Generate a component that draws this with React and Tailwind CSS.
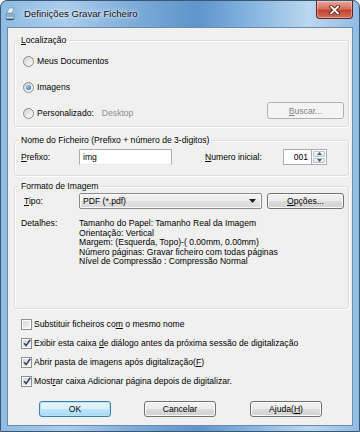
import React from 'react';

const Radio = ({ checked }) => (
  <span className="w-[11px] h-[11px] rounded-full border border-[#8b8b8b] bg-linear-to-br from-[#d4d4d4] to-[#fbfbfb] flex items-center justify-center shrink-0">
    {checked && (
      <span className="w-[5px] h-[5px] rounded-full bg-[radial-gradient(circle_at_35%_35%,#8fd0ff,#1b5fae)]" />
    )}
  </span>
);

const Check = ({ checked }) => (
  <span className="w-[11px] h-[11px] border border-[#8e8f8f] bg-white p-[1px] shrink-0 flex">
    <span className="flex-1 bg-linear-to-br from-[#d6d6d6] to-[#f6f6f6] flex items-center justify-center">
      {checked && (
        <svg width="8" height="8" viewBox="0 0 8 8">
          <path d="M1 4.2 L3.1 6.6 L7.2 0.8" stroke="#2b3f6b" strokeWidth="1.5" fill="none" />
        </svg>
      )}
    </span>
  </span>
);

const Btn = ({ children, kind = 'normal', className = '' }) => {
  const styles = {
    normal: 'border-[#707070] text-black shadow-[inset_0_0_0_1px_#fcfcfc] bg-[linear-gradient(#f2f2f2_0%,#ebebeb_50%,#dddddd_51%,#cfcfcf_100%)]',
    def: 'border-[#3c7fb1] text-black shadow-[inset_0_0_0_1px_#b9e2f7] bg-[linear-gradient(#eaf6fd_0%,#d9f0fc_50%,#bee6fd_51%,#a7d9f5_100%)]',
    disabled: 'border-[#adb2b5] text-[#838383] bg-[#f4f4f4]',
  };
  return (
    <div className={`h-[17px] border rounded-[3px] flex items-center justify-center ${styles[kind]} ${className}`}>
      {children}
    </div>
  );
};

const Group = ({ legend, className = '', children }) => (
  <fieldset className={`m-0 p-0 border border-[#d5dfe5] rounded-[3px] shadow-[inset_1px_1px_0_#fff,1px_1px_0_#fff] ${className}`}>
    <legend className="ml-[4px] px-[2px] leading-[10px]">{legend}</legend>
    {children}
  </fieldset>
);

const U = ({ children }) => <span className="underline underline-offset-[1px]">{children}</span>;

export default function App() {
  const details = [
    'Tamanho do Papel: Tamanho Real da Imagem',
    'Orientação: Vertical',
    'Margem: (Esquerda, Topo)-( 0.00mm, 0.00mm)',
    'Número páginas: Gravar ficheiro com todas páginas',
    'Nível de Compressão : Compressão Normal',
  ];

  return (
    <div className="w-[360px] h-[432px] font-['Liberation_Sans',Arial,sans-serif] text-[8.6px] leading-[10px] text-black overflow-hidden">
      <div className="h-full flex flex-col border border-[#3a5672] rounded-t-[7px] px-[6px] pb-[5px] bg-[linear-gradient(90deg,#8ebbe2_0%,#a9cdec_18%,#7aaad8_38%,#5e95cb_55%,#86b5e0_70%,#bcd7ef_86%,#8fbce4_100%)]">
        {/* title bar */}
        <div className="h-[26px] flex items-start">
          <div className="flex-1 h-[25px] flex items-center -ml-[2px] gap-[9px]">
            <svg width="10" height="14" viewBox="0 0 10 14">
              <path d="M4 1 L9 1 L7 6 L2 6 Z" fill="#e8f2fb" stroke="#7f9cb8" strokeWidth="0.8" />
              <path d="M1 7 L9 7 L9 12 L1 12 Z" fill="#c9d6e3" stroke="#5e7894" strokeWidth="0.8" />
              <path d="M1.5 12.5 L8.5 12.5" stroke="#2f4c6e" strokeWidth="1.2" />
              <path d="M2 9 L8 9" stroke="#3a86d4" strokeWidth="1" />
            </svg>
            <span className="text-[9.6px] text-[#111] [text-shadow:0_0_6px_rgba(255,255,255,0.95),0_0_3px_rgba(255,255,255,0.9)]">
              Definições Gravar Ficheiro
            </span>
          </div>
          <div className="w-[37px] h-[18px] rounded-b-[4px] border border-t-0 border-[#6b2219] bg-[linear-gradient(#e9a99c_0%,#d8705f_45%,#c1422f_55%,#d1705e_100%)] shadow-[inset_0_0_0_1px_rgba(255,255,255,0.35)] flex items-center justify-center">
            <svg width="11" height="10" viewBox="0 0 11 10">
              <path d="M2 1.5 L9 8.5 M9 1.5 L2 8.5" stroke="#4a1610" strokeWidth="3.4" strokeLinecap="square" />
              <path d="M2 1.5 L9 8.5 M9 1.5 L2 8.5" stroke="#ffffff" strokeWidth="1.8" strokeLinecap="square" />
            </svg>
          </div>
        </div>

        {/* client area */}
        <div className="flex-1 border border-[#6e8aa6] bg-[#f0f0f0] pt-[7px] pl-[6px] pr-[3px]">
          <Group legend={<><U>L</U>ocalização</>}>
            <div className="pl-[8px] pr-[4px] pt-[3px]">
              <div className="h-[26px] flex items-center gap-[3px]">
                <Radio /> <span>Meus Documentos</span>
              </div>
              <div className="h-[26px] flex items-center gap-[3px]">
                <Radio checked /> <span>Imagens</span>
              </div>
              <div className="h-[26px] flex items-start">
                <div className="h-full flex items-center gap-[3px]">
                  <Radio /> <span>Personalizado:</span>
                  <span className="ml-[5px] text-[#8d8d8d]">Desktop</span>
                </div>
                <Btn kind="disabled" className="ml-auto mt-[2px] w-[77px]">
                  <span><U>B</U>uscar...</span>
                </Btn>
              </div>
            </div>
          </Group>

          <Group legend="Nome do Ficheiro (Prefixo + número de 3-digitos)" className="mt-[8px]">
            <div className="pl-[6px] pt-[4px] pb-[10px] flex items-center">
              <span className="w-[58px]"><U>P</U>refixo:</span>
              <div className="w-[93px] h-[16px] border border-[#abadb3] border-b-[#e3e9ef] bg-white pl-[3px] flex items-center">img</div>
              <span className="ml-[33px] w-[78px]"><U>N</U>umero inicial:</span>
              <div className="w-[29px] h-[16px] border border-[#abadb3] bg-white pr-[3px] flex items-center justify-end">001</div>
              <div className="w-[15px] h-[16px] flex flex-col border border-[#abadb3] border-l-0 bg-white p-[1px] gap-[1px]">
                <div className="flex-1 rounded-[1px] border border-[#b6c4d2] bg-linear-to-b from-[#f4f8fb] to-[#dde6ee] flex items-center justify-center">
                  <svg width="5" height="3" viewBox="0 0 5 3"><path d="M0 3 L2.5 0 L5 3 Z" fill="#4d5d70" /></svg>
                </div>
                <div className="flex-1 rounded-[1px] border border-[#b6c4d2] bg-linear-to-b from-[#f4f8fb] to-[#dde6ee] flex items-center justify-center">
                  <svg width="5" height="3" viewBox="0 0 5 3"><path d="M0 0 L2.5 3 L5 0 Z" fill="#4d5d70" /></svg>
                </div>
              </div>
            </div>
          </Group>

          <Group legend="Formato de Imagem" className="mt-[5px]">
            <div className="pl-[6px] pr-[4px] pt-[2px] pb-[41px]">
              <div className="h-[16px] flex items-center">
                <span className="w-[58px] pl-[3px]"><U>T</U>ipo:</span>
                <div className="w-[183px] h-[16px] border border-[#8a8a8a] rounded-[2px] bg-[linear-gradient(#f4f4f4_0%,#ececec_50%,#e2e2e2_51%,#d9d9d9_100%)] shadow-[inset_0_0_0_1px_#fafafa] pl-[3px] pr-[5px] flex items-center">
                  <span className="flex-1">PDF (*.pdf)</span>
                  <svg width="7" height="4" viewBox="0 0 7 4"><path d="M0 0 L7 0 L3.5 4 Z" fill="#1c1c1c" /></svg>
                </div>
                <Btn className="ml-[5px] w-[77px] !h-[16px]">
                  <span><U>O</U>pções...</span>
                </Btn>
              </div>
              <div className="flex mt-[10px] leading-[9.5px]">
                <span className="w-[58px]">Detalhes:</span>
                <div className="flex flex-col">
                  {details.map((d) => (
                    <span key={d} className="whitespace-nowrap">{d}</span>
                  ))}
                </div>
              </div>
            </div>
          </Group>

          <div className="mt-[6px] pl-[7px]">
            <div className="h-[19px] flex items-center gap-[2px]">
              <Check /> <span>Substituir ficheiros co<U>m</U> o mesmo nome</span>
            </div>
            <div className="h-[19px] flex items-center gap-[2px]">
              <Check checked /> <span>Exibir esta caixa <U>d</U>e diálogo antes da próxima sessão de digitalização</span>
            </div>
            <div className="h-[19px] flex items-center gap-[2px]">
              <Check checked /> <span>Abrir pasta de imagens após digitalização(<U>F</U>)</span>
            </div>
            <div className="h-[19px] flex items-center gap-[2px]">
              <Check checked /> <span>Most<U>r</U>ar caixa Adicionar página depois de digitalizar.</span>
            </div>
          </div>

          <div className="mt-[10px] ml-[25px] flex gap-[33px]">
            <Btn kind="def" className="w-[72px] !h-[16px]">OK</Btn>
            <Btn className="w-[72px] !h-[16px]">Cancelar</Btn>
            <Btn className="w-[72px] !h-[16px] ml-[1px]">Ajuda(<U>H</U>)</Btn>
          </div>
        </div>
      </div>
    </div>
  );
}
